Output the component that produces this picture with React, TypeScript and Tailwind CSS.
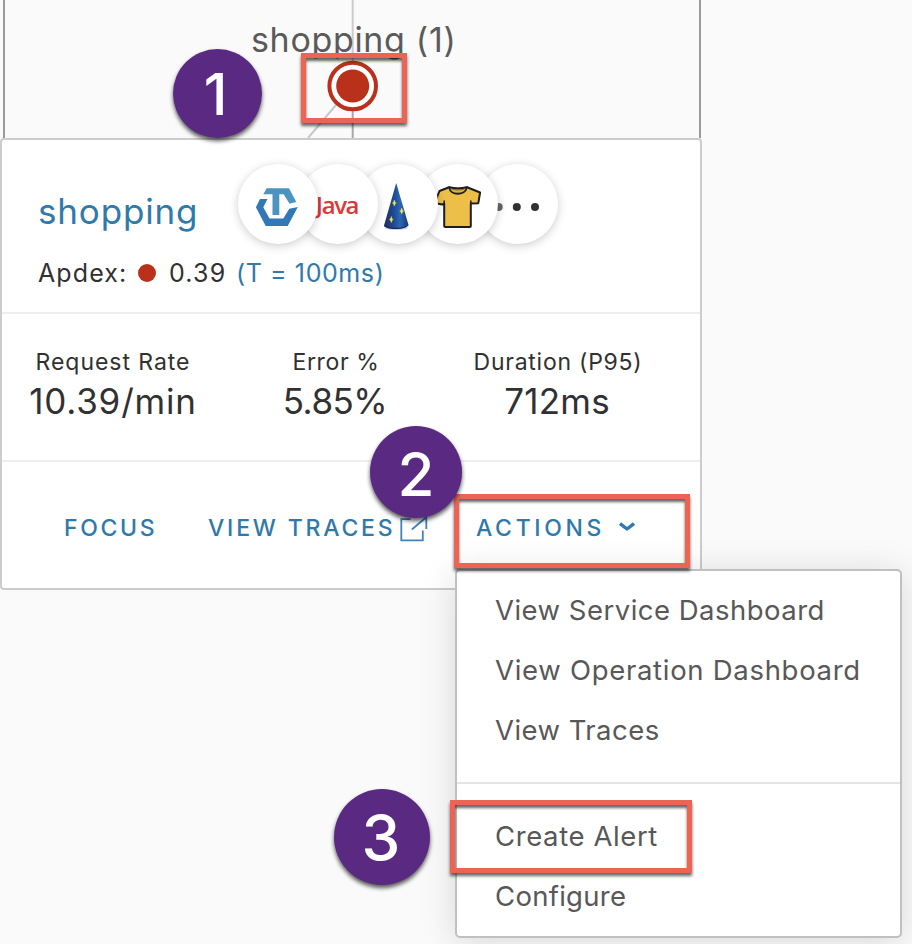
import type { ReactNode } from "react";

function Badge({ className, children }: { className: string; children: ReactNode }) {
  return (
    <div
      className={`absolute z-30 flex items-center justify-center rounded-full bg-[#5a2a82] font-medium text-white shadow-[0_3px_4px_rgba(0,0,0,0.65)] ${className}`}
    >
      {children}
    </div>
  );
}

function Frame({ className }: { className: string }) {
  return (
    <div
      className={`absolute z-20 border-5 border-[#ec6554] shadow-[0_3px_3px_rgba(0,0,0,0.6),inset_0_3px_3px_rgba(0,0,0,0.6)] ${className}`}
    />
  );
}

function TechCircle({ className, children }: { className: string; children?: ReactNode }) {
  return (
    <div
      className={`relative -mr-5 flex size-20 shrink-0 items-center justify-center rounded-full bg-white shadow-[0_2px_10px_rgba(0,0,0,0.2)] ${className}`}
    >
      {children}
    </div>
  );
}

function TracingLogo() {
  return (
    <svg viewBox="0 0 80 80" className="size-20">
      <path d="M28.7 24.3H51L58.3 38L51.6 39.800L45.600 30.300H41.300V51H34.500V30.300H25.300z" fill="#4a94bf" />
      <path d="M22 35H29.500L25.300 43.300L31.500 54.600H45.300L51.300 44.700L59.800 43L49.700 62H27.700L17.900 43.300z" fill="#3278b7" />
    </svg>
  );
}

function HatLogo() {
  return (
    <svg viewBox="0 0 80 80" className="size-20">
      <defs>
        <linearGradient id="hat" x1="0" y1="0" x2="1" y2="0">
          <stop offset="0" stopColor="#20285f" />
          <stop offset="0.45" stopColor="#1f4f9a" />
          <stop offset="0.65" stopColor="#2a68b5" />
          <stop offset="1" stopColor="#1b3578" />
        </linearGradient>
      </defs>
      <ellipse cx="38.5" cy="63.8" rx="11.5" ry="2.2" fill="#a9a9b4" opacity="0.6" />
      <path d="M38.2 19l12.4 42.2c-4 4.6-20.6 5-24.7.7z" fill="url(#hat)" />
      <path d="M26 61.5c5 3.2 18 3.200 24.500-.5-3 5-21 5.600-24.500.5z" fill="#1a2860" />
      <g fill="#f6e84e" stroke="#f6e84e" strokeWidth=".4">
        <path d="M36.300 36l1 2.700 1 .3-1 .4-1 2.700-1-2.700-1-.4 1-.3z" />
        <path d="M43.700 44l1 2.700 1 .3-1 .4-1 2.700-1-2.700-1-.4 1-.3z" />
        <path d="M33.300 52.500l1 2.700 1 .3-1 .4-1 2.700-1-2.700-1-.4 1-.3z" />
      </g>
    </svg>
  );
}

function ShirtLogo() {
  return (
    <svg viewBox="0 0 80 80" className="size-20">
      <path
        d="M31 23.200L21.500 27l-4.800 12 7.500 1.500 2-.8V62c0 .6.300 1 1 1h24.600c.6 0 1-.4 1-1V39.500l7.500-.3 1.800-10.700-13-5.300c-5.300 1.400-12.800 1.400-18.100 0z"
        fill="#eebf48"
        stroke="#1d1d1b"
        strokeWidth="2"
        strokeLinejoin="round"
      />
      <path d="M31.200 23.300c1 8.600 16 8.600 17.700 0-5 1.500-12.700 1.500-17.700 0z" fill="#dcb04a" stroke="#1d1d1b" strokeWidth="1.800" strokeLinejoin="round" />
      <path d="M32.500 24.500c4 2 11 2 15 0" fill="none" stroke="#8c7234" strokeWidth="1" />
      <path d="M26.200 39.500v-3M52.800 39.500v-3" stroke="#1d1d1b" strokeWidth="1.500" />
    </svg>
  );
}

function Metric({ label, value, labelClass, valueClass }: { label: string; value: string; labelClass: string; valueClass: string }) {
  return (
    <div className="flex w-[222px] flex-col items-center whitespace-nowrap">
      <div className={`text-[23px] leading-7 ${labelClass}`}>{label}</div>
      <div className={`text-[35px] leading-[50px] ${valueClass}`}>{value}</div>
    </div>
  );
}

export default function App() {
  return (
    <div className="relative h-[944px] w-[912px] overflow-hidden bg-[#fafafa] font-['Inter','Liberation_Sans',sans-serif] text-[#313131]">
      <div className="relative ml-[3px] h-[138px] w-[698px] border-x-2 border-[#999]">
        <svg viewBox="5 0 694 138" className="absolute inset-0 h-[138px] w-[694px]">
          <path d="M352.700 0v62" stroke="#ccc" strokeWidth="2" />
          <path d="M352.700 110v28" stroke="#a8a8a8" strokeWidth="2" />
          <path d="M336 105l-28 33" stroke="#c8c8c8" strokeWidth="2" />
          <circle cx="352.700" cy="86" r="23.300" fill="#fff" stroke="#b9311b" strokeWidth="4" />
          <circle cx="352.700" cy="86" r="16.500" fill="#b9311b" />
        </svg>
        <div className="relative pt-[15px] pl-[246px] text-[34px] leading-[50px] tracking-[0.67px] whitespace-nowrap text-[#5a5a5a]">
          shopping (1)
        </div>
      </div>

      <div className="h-[452px] w-[702px] rounded-[4px] border-2 border-[#ccc] bg-white">
        <div className="h-[172px] pt-6 pl-9">
          <div className="flex h-20 items-center">
            <div className="mt-[14px] w-[200px] text-[35px] leading-[50px] tracking-[0.85px] whitespace-nowrap text-[#3079ab]">shopping</div>
            <div className="flex">
              <TechCircle className="z-5">
                <TracingLogo />
              </TechCircle>
              <TechCircle className="z-4">
                <span className="mt-[2px] mr-[2px] font-['Open_Sans',sans-serif] text-[24px] leading-none font-semibold tracking-[-1.4px] text-[#dd3a35]">
                  Java
                </span>
              </TechCircle>
              <TechCircle className="z-3">
                <HatLogo />
              </TechCircle>
              <TechCircle className="z-2">
                <ShirtLogo />
              </TechCircle>
              <TechCircle className="z-1">
                <svg viewBox="0 0 80 80" className="size-20" fill="#313131">
                  <circle cx="20.700" cy="43" r="4" fill="#666" />
                  <circle cx="38.800" cy="43" r="4" />
                  <circle cx="57" cy="43" r="4" />
                </svg>
              </TechCircle>
            </div>
          </div>
          <div className="mt-3 flex items-center text-[25px] leading-[34px] whitespace-nowrap">
            <span className="w-[100px] tracking-[1.1px]">Apdex:</span>
            <span className="size-[18px] rounded-full bg-[#b9311b]" />
            <span className="ml-[13px] w-[67px] tracking-[1.2px]">0.39</span>
            <span className="tracking-[0.6px] text-[#3079ab]">(T = 100ms)</span>
          </div>
        </div>
        <div className="flex h-[150px] border-y-2 border-[#eee] pt-[34px]">
          <Metric label="Request Rate" value="10.39/min" labelClass="tracking-[0.95px]" valueClass="tracking-[0.8px]" />
          <Metric label="Error %" value="5.85%" labelClass="pl-[2px] tracking-[0.6px]" valueClass="tracking-[-0.5px]" />
          <Metric label="Duration (P95)" value="712ms" labelClass="pl-[2px] tracking-[0.75px]" valueClass="tracking-[0.24px]" />
        </div>
        <div className="flex pt-[50px] pl-[62px] text-[23px] leading-[33px] font-medium whitespace-nowrap text-[#3079ab]">
          <span className="w-[144px] tracking-[2.65px]">FOCUS</span>
          <span className="w-[188px] tracking-[2.8px]">VIEW TRACES</span>
          <svg viewBox="0 0 30 28" className="mt-[3px] ml-[2px] h-7 w-[30px]" fill="none" stroke="#3c85bd" strokeWidth="1.800">
            <path d="M12.500 4.200H3.300v21.200h21.500v-9.800M13.800 14.500L28 2.500M28.300 2v12" />
          </svg>
          <span className="ml-[48px] w-[143px] tracking-[3.65px]">ACTIONS</span>
          <svg viewBox="0 0 16 10" className="mt-[10px] h-[10px] w-4" fill="none" stroke="#3079b5" strokeWidth="3.400" strokeLinejoin="round">
            <path d="M1 1.500L8 7l7-5.500" />
          </svg>
        </div>
      </div>

      <div className="absolute top-[569px] left-[455px] z-10 h-[369px] w-[447px] rounded-[5px] border-2 border-[#c0c0c0] bg-white pt-[9px] text-[27.5px] leading-[60px] whitespace-nowrap text-[#585858] shadow-[0_4px_36px_rgba(0,0,0,0.14)]">
        <div className="pl-[38px] tracking-[0.48px]">View Service Dashboard</div>
        <div className="pl-[38px] tracking-[0.7px]">View Operation Dashboard</div>
        <div className="pl-[38px] tracking-[0.45px]">View Traces</div>
        <div className="my-[22px] h-[2px] bg-[#e4e4e4]" />
        <div className="pl-[38px] tracking-[0.6px]">Create Alert</div>
        <div className="pl-[38px] tracking-[0.29px]">Configure</div>
      </div>

      <Frame className="top-[53px] left-[301px] h-[70px] w-[106px]" />
      <Frame className="top-[494px] left-[454px] h-[74px] w-[236px]" />
      <Frame className="top-[800px] left-[450px] h-[73px] w-[242px]" />
      <Badge className="top-[49px] left-[173px] size-[89px] pt-[2px] pr-1 text-[57px]">1</Badge>
      <Badge className="top-[426px] left-[370px] size-[92px] pt-1 text-[60px]">2</Badge>
      <Badge className="top-[789px] left-[334px] size-[96px] pr-[2px] text-[62px]">3</Badge>
    </div>
  );
}
